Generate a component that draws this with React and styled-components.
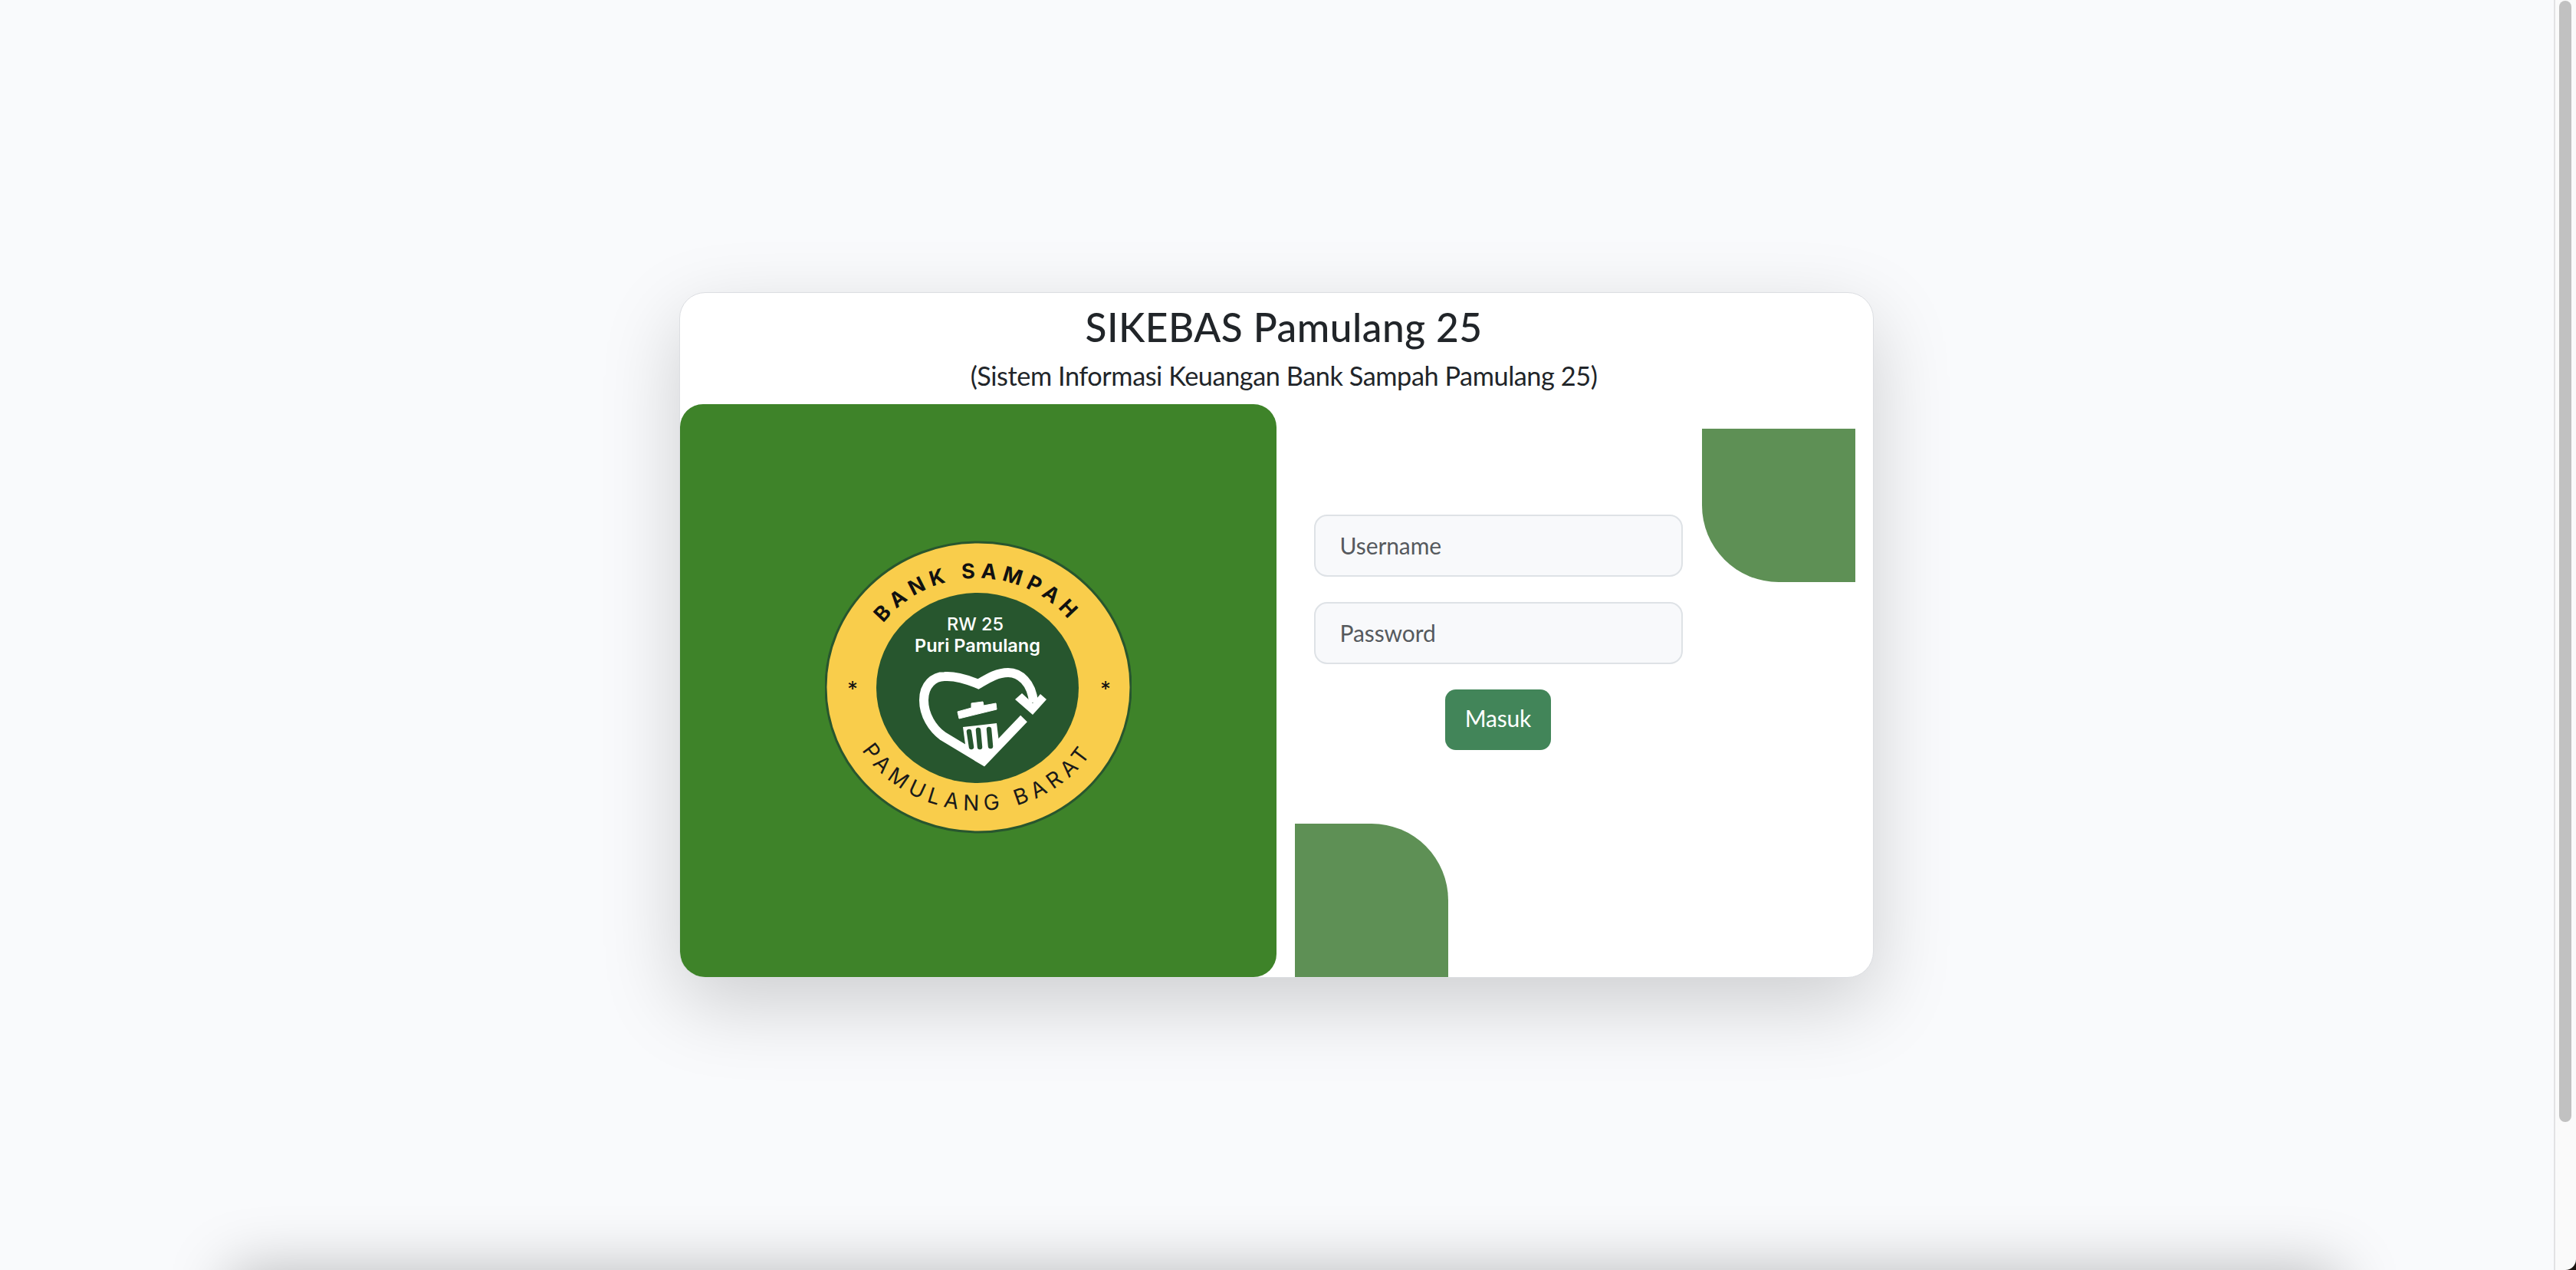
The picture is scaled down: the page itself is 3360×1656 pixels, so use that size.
import React from "react";
import styled, { createGlobalStyle } from "styled-components";

const Global = createGlobalStyle`
  html, body {
    margin: 0;
    height: 1656px;
    overflow: hidden;
    background: #f9fafc;
    font-family: "Lato", "Open Sans", sans-serif;
  }
  * { box-sizing: border-box; }
`;

const Page = styled.div`
  width: 3331px;
  height: 1656px;
  position: relative;
  overflow: hidden;
`;

const Main = styled.main`
  height: 1656px;
  padding: 381px 2px 0 0;
  display: flex;
  justify-content: center;
  align-items: flex-start;
`;

const Card = styled.section`
  width: 1558px;
  height: 894px;
  background: #fff;
  border: 1px solid #dcdee2;
  border-radius: 34px;
  box-shadow: 0 34px 103px rgba(0, 0, 0, 0.175);
  display: flex;
  flex-direction: column;
  overflow: hidden;
`;

const Header = styled.header`
  height: 145px;
  flex: none;
  padding-left: 20px;
  text-align: center;
`;

const Title = styled.h2`
  margin: 0;
  padding-top: 14px;
  font-size: 51.4px;
  line-height: 60px;
  font-weight: 500;
  letter-spacing: 0.5px;
  color: #212529;
`;

const Subtitle = styled.p`
  margin: 14px 0 0;
  font-size: 34.3px;
  line-height: 40px;
  font-weight: 400;
  letter-spacing: -0.45px;
  color: #212529;
`;

const Body = styled.div`
  flex: 1;
  display: flex;
  min-height: 0;
`;

const LogoPanel = styled.div`
  width: 778px;
  flex: none;
  background: #3e8329;
  border-radius: 30px;
  display: flex;
  align-items: center;
  justify-content: center;
`;

const FormPanel = styled.div`
  flex: 1;
  position: relative;
`;

const Corner = styled.div`
  position: absolute;
  width: 200px;
  height: 200px;
  background: #5e9055;
  ${(p) =>
    p.$at === "top"
      ? "top: 32px; right: 23px; border-bottom-left-radius: 100px;"
      : "bottom: 0; left: 24px; border-top-right-radius: 100px;"}
`;

const Form = styled.form`
  position: absolute;
  left: 49px;
  top: 144px;
  width: 481px;
  display: flex;
  flex-direction: column;
  gap: 33px;
`;

const Input = styled.input`
  width: 100%;
  height: 81px;
  padding: 0 32px 2px;
  background: #f8f9fb;
  border: 2px solid #dee2e6;
  border-radius: 17px;
  font: 400 30px "Lato", sans-serif;
  letter-spacing: -0.1px;
  color: #212529;
  outline: none;
  &::placeholder { color: #565a5e; opacity: 1; }
`;

const Button = styled.button`
  align-self: center;
  width: 138px;
  height: 79px;
  padding: 0 0 5px;
  border: none;
  border-radius: 14px;
  background: #428559;
  color: #fff;
  font: 400 30px "Lato", sans-serif;
  letter-spacing: -0.2px;
`;

const Footer = styled.footer`
  height: 200px;
  width: 2750px;
  margin-left: 300px;
  background: #f9fafc;
  box-shadow: 0 0 80px rgba(0, 0, 0, 0.26);
`;

const Scrollbar = styled.div`
  position: fixed;
  top: 0;
  right: 0;
  bottom: 0;
  width: 29px;
  background: #fafafa;
  border-left: 2px solid #e2e2e4;
`;

const Thumb = styled.div`
  position: absolute;
  top: 1px;
  left: 5px;
  width: 16px;
  height: 1462px;
  border-radius: 8px;
  background: #c1c1c1;
`;

const ScreenCorner = styled.svg`
  position: fixed;
  right: 0;
  bottom: 0;
`;

const Logo = () => (
  <svg width="400" height="401" viewBox="36 20 400 401">
    <defs>
      <path id="arcTop" d="M 83 217 A 152 143 0 0 1 387 217" fill="none" />
      <path id="arcBottom" d="M 60 217 A 175 160 0 0 0 410 217" fill="none" />
    </defs>
    <ellipse cx="236" cy="216" rx="199" ry="189" fill="#f9cd4b" stroke="#28562e" strokeWidth="3" />
    <ellipse cx="235" cy="217" rx="132" ry="124" fill="#27562e" />
    <text fontFamily="Inter, sans-serif" fontSize="27" fontWeight="700" letterSpacing="7.2" fill="#111">
      <textPath href="#arcTop" startOffset="50%" textAnchor="middle">BANK SAMPAH</textPath>
    </text>
    <text fontFamily="Inter, sans-serif" fontSize="28" fontWeight="400" letterSpacing="7" fill="#1a1a1a">
      <textPath href="#arcBottom" startOffset="50%" textAnchor="middle">PAMULANG BARAT</textPath>
    </text>
    <text x="72" y="228" fontFamily="Inter, sans-serif" fontSize="27" textAnchor="middle" fill="#111">*</text>
    <text x="402" y="228" fontFamily="Inter, sans-serif" fontSize="27" textAnchor="middle" fill="#111">*</text>
    <text x="232" y="142" fontFamily="Inter, sans-serif" fontSize="23.5" fontWeight="500" textAnchor="middle" fill="#fff">RW 25</text>
    <text x="235" y="170" fontFamily="Inter, sans-serif" fontSize="23.5" fontWeight="600" textAnchor="middle" fill="#fff">Puri Pamulang</text>
    <path
      d="M 295.5 257 L 243 312 L 190 280 C 176 270 165 252 165 233 C 165 213 178 202 192 202 C 207 201 222 206 236 212 C 248 205 260 197 275 197 C 290 197 306 210 308 236"
      fill="none"
      stroke="#fff"
      strokeWidth="12"
    />
    <path d="M 284 232 L 293 224 L 307 237 L 317 225 L 325 232 L 307 252 Z" fill="#fff" />
    <path
      d="M 209 248 L 227 243 L 227 237 L 242 235 L 243 240 L 259 237 L 260 245 L 211 257 Z"
      fill="#fff"
      stroke="#fff"
      strokeLinejoin="round"
    />
    <path d="M 216 268 L 260 263 L 263 288 L 243 312 L 220 298 Z" fill="#fff" />
    <g stroke="#27562e" strokeWidth="6.5" strokeLinecap="round" fill="none">
      <path d="M 224 274 L 227 294" />
      <path d="M 236 272 L 238 294" />
      <path d="M 250 271 L 252 293" />
    </g>
  </svg>
);

export default function App() {
  return (
    <Page>
      <Global />
      <Main>
        <Card>
          <Header>
            <Title>SIKEBAS Pamulang 25</Title>
            <Subtitle>(Sistem Informasi Keuangan Bank Sampah Pamulang 25)</Subtitle>
          </Header>
          <Body>
            <LogoPanel>
              <Logo />
            </LogoPanel>
            <FormPanel>
              <Corner $at="top" />
              <Corner $at="bottom" />
              <Form>
                <Input placeholder="Username" />
                <Input placeholder="Password" type="password" />
                <Button type="button">Masuk</Button>
              </Form>
            </FormPanel>
          </Body>
        </Card>
      </Main>
      <Footer />
      <Scrollbar>
        <Thumb />
      </Scrollbar>
      <ScreenCorner width="14" height="14" viewBox="0 0 14 14">
        <path d="M14 0 A14 14 0 0 1 0 14 L14 14 Z" fill="#1a1410" />
      </ScreenCorner>
    </Page>
  );
}
